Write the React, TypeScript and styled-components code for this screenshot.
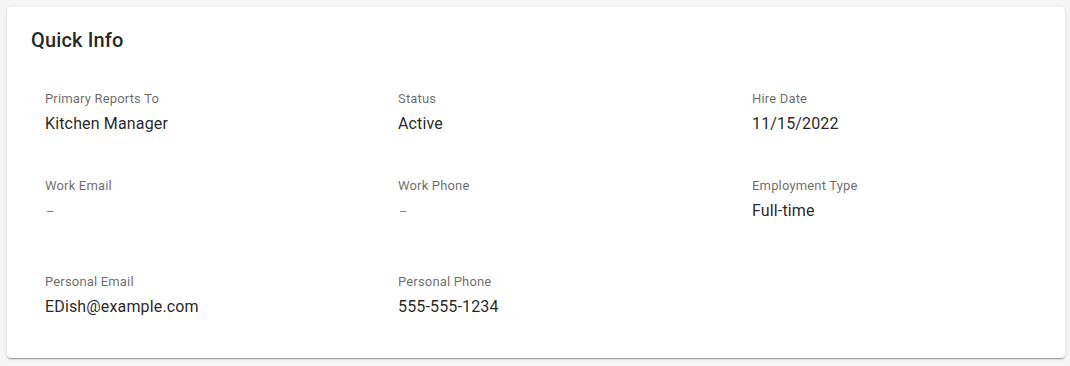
import React from 'react';
import styled, { createGlobalStyle } from 'styled-components';

const GlobalStyle = createGlobalStyle`
  html, body {
    margin: 0;
    padding: 0;
    background: #f5f5f5;
    font-family: Roboto, "Liberation Sans", Arial, sans-serif;
  }
`;

type Field = { label: string; value: string; empty?: boolean };

const FIELDS: Field[][] = [
  [
    { label: 'Primary Reports To', value: 'Kitchen Manager' },
    { label: 'Status', value: 'Active' },
    { label: 'Hire Date', value: '11/15/2022' },
  ],
  [
    { label: 'Work Email', value: '–', empty: true },
    { label: 'Work Phone', value: '–', empty: true },
    { label: 'Employment Type', value: 'Full-time' },
  ],
  [
    { label: 'Personal Email', value: 'EDish@example.com' },
    { label: 'Personal Phone', value: '555-555-1234' },
  ],
];

function App() {
  return (
    <StPage>
      <GlobalStyle />
      <StCard>
        <StTitle>Quick Info</StTitle>
        <StGrid>
          {FIELDS.map((row, r) =>
            row.map((f) => (
              <StField key={f.label} $extraTop={r === 2}>
                <StLabel>{f.label}</StLabel>
                <StValue $empty={f.empty}>{f.value}</StValue>
              </StField>
            )),
          )}
        </StGrid>
      </StCard>
    </StPage>
  );
}

export default App;

const StPage = styled.div`
  padding: 7px 5px 8px 7px;
`;

const StCard = styled.div`
  box-sizing: border-box;
  width: 1058px;
  height: 351px;
  background: #fff;
  border-radius: 4px;
  padding: 17px 24px 16px;
  box-shadow: 0px 2px 1px -1px rgba(0, 0, 0, 0.2), 0px 1px 1px 0px rgba(0, 0, 0, 0.14),
    0px 1px 3px 0px rgba(0, 0, 0, 0.12);
`;

const StTitle = styled.h6`
  margin: 0;
  font-size: 20px;
  font-weight: 500;
  line-height: 32px;
  color: rgba(0, 0, 0, 0.87);
  letter-spacing: 0.15px;
`;

const StGrid = styled.div`
  display: grid;
  grid-template-columns: 353px 354px 1fr;
  row-gap: 40px;
  margin-top: 33px;
  padding-left: 14px;
`;

const StField = styled.div<{ $extraTop?: boolean }>`
  display: flex;
  flex-direction: column;
  gap: 3px;
  margin-top: ${({ $extraTop }) => ($extraTop ? '9px' : '0')};
`;

const StLabel = styled.span`
  font-size: 13px;
  line-height: 20px;
  letter-spacing: 0.17px;
  color: rgba(0, 0, 0, 0.6);
`;

const StValue = styled.span<{ $empty?: boolean }>`
  font-size: ${({ $empty }) => ($empty ? '13px' : '16px')};
  line-height: 24px;
  letter-spacing: 0.15px;
  padding: ${({ $empty }) => ($empty ? '1px 0 0 1px' : '0')};
  height: 24px;
  box-sizing: border-box;
  color: ${({ $empty }) => ($empty ? 'rgba(0, 0, 0, 0.5)' : 'rgba(0, 0, 0, 0.87)')};
`;
